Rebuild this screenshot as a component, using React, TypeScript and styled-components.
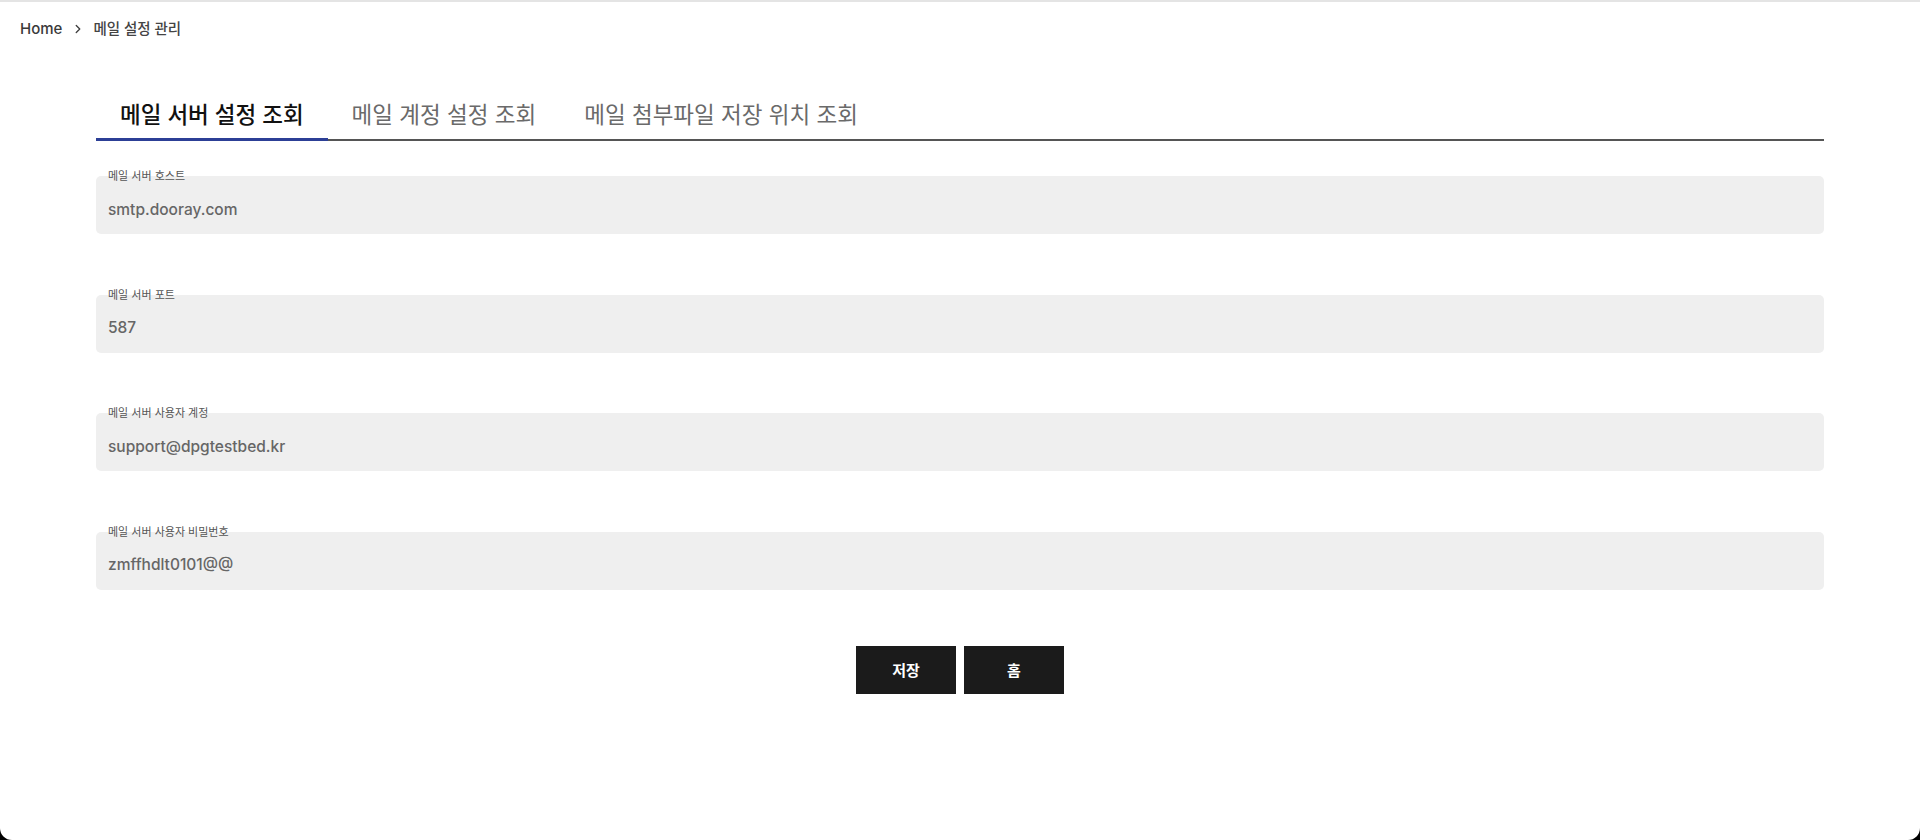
import React, { useState } from "react";
import styled, { createGlobalStyle } from "styled-components";

const GlobalStyle = createGlobalStyle`
  html, body {
    margin: 0;
    padding: 0;
    background: #000;
  }
  body {
    font-family: Inter, "Noto Sans CJK KR", sans-serif;
  }
  * {
    box-sizing: border-box;
  }
`;

const tabs = ["메일 서버 설정 조회", "메일 계정 설정 조회", "메일 첨부파일 저장 위치 조회"];

const fields = [
  { label: "메일 서버 호스트", value: "smtp.dooray.com" },
  { label: "메일 서버 포트", value: "587" },
  { label: "메일 서버 사용자 계정", value: "support@dpgtestbed.kr" },
  { label: "메일 서버 사용자 비밀번호", value: "zmffhdlt0101@@" },
];

export default function App() {
  const [active, setActive] = useState(0);

  return (
    <>
      <GlobalStyle />
      <Page>
        <Breadcrumb>
          <Crumb>Home</Crumb>
          <Chevron viewBox="0 0 24 24">
            <path d="M9 6l6 6-6 6" />
          </Chevron>
          <Crumb $current>메일 설정 관리</Crumb>
        </Breadcrumb>

        <Content>
          <TabList>
            {tabs.map((t, i) => (
              <Tab key={t} $active={i === active} onClick={() => setActive(i)}>
                {t}
              </Tab>
            ))}
          </TabList>

          <Form>
            {fields.map(f => (
              <Field key={f.label}>
                <FieldLabel>{f.label}</FieldLabel>
                <FieldBox>{f.value}</FieldBox>
              </Field>
            ))}
          </Form>

          <Buttons>
            <DarkButton>저장</DarkButton>
            <DarkButton>홈</DarkButton>
          </Buttons>
        </Content>
      </Page>
    </>
  );
}

const Page = styled.div`
  height: 840px;
  background: #fff;
  border-top: 2px solid #e4e4e4;
  border-radius: 0 0 12px 12px;
  overflow: hidden;
`;

const Breadcrumb = styled.nav`
  display: flex;
  align-items: center;
  gap: 7px;
  padding: 16px 0 0 20px;
  height: 38px;
`;

const Crumb = styled.span<{ $current?: boolean }>`
  font-size: ${p => (p.$current ? "14.5px" : "15px")};
  font-weight: 500;
  color: ${p => (p.$current ? "#444" : "#3a3a3a")};
  line-height: 20px;
`;

const Chevron = styled.svg`
  width: 14px;
  height: 14px;
  fill: none;
  stroke: #444;
  stroke-width: 2.4;
  stroke-linecap: round;
  stroke-linejoin: round;
  margin: 0 1px 0 2px;
`;

const Content = styled.main`
  padding: 0 96px;
  margin-top: 60px;
`;

const TabList = styled.div`
  display: flex;
  border-bottom: 2px solid #555;
`;

const Tab = styled.button<{ $active: boolean }>`
  appearance: none;
  background: none;
  border: none;
  border-bottom: 3px solid ${p => (p.$active ? "#2c3f96" : "transparent")};
  margin-bottom: -2px;
  padding: 0 24px 8px;
  font-family: Inter, "Noto Sans CJK KR", sans-serif;
  font-size: 22.5px;
  line-height: 30px;
  font-weight: ${p => (p.$active ? 500 : 400)};
  color: ${p => (p.$active ? "#111" : "#6a6a6a")};
  cursor: pointer;
`;

const Form = styled.div`
  display: flex;
  flex-direction: column;
  gap: 60.5px;
  margin-top: 35px;
`;

const Field = styled.div`
  position: relative;
`;

const FieldLabel = styled.label`
  position: absolute;
  left: 12px;
  top: -6px;
  font-size: 11px;
  line-height: 13px;
  color: #555;
`;

const FieldBox = styled.div`
  height: 58px;
  display: flex;
  align-items: center;
  padding: 8px 12px 0;
  background: #efefef;
  border-radius: 5px;
  font-size: 15.5px;
  font-weight: 500;
  color: #666;
`;

const Buttons = styled.div`
  display: flex;
  justify-content: center;
  gap: 8px;
  margin-top: 56px;
`;

const DarkButton = styled.button`
  width: 100px;
  height: 48px;
  border: none;
  background: #1b1b1b;
  color: #fff;
  font-family: Inter, "Noto Sans CJK KR", sans-serif;
  font-size: 15px;
  font-weight: 700;
  cursor: pointer;
`;
